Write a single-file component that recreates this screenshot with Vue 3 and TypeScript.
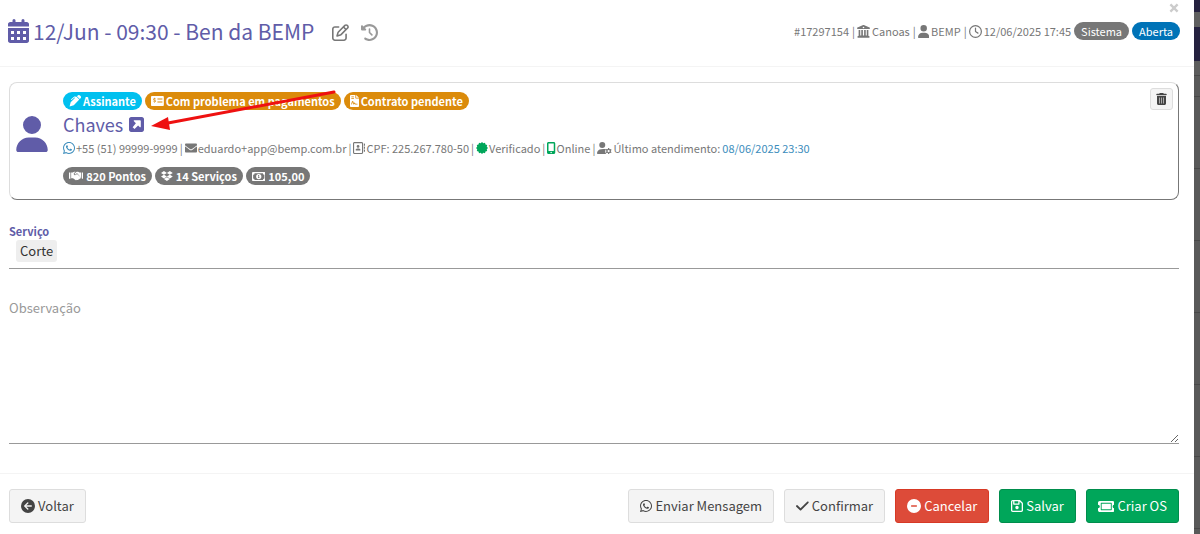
<script setup lang="ts">
import { ref } from 'vue'

interface Glyph {
  w: number
  h: number
  d: string
}

// Twelve-lobed seal used for the "Verificado" mark
function seal(): string {
  const points: string[] = []
  for (let i = 0; i < 24; i++) {
    const r = i % 2 === 0 ? 8 : 6.6
    const a = (i * Math.PI) / 12
    points.push(`${(8 + r * Math.cos(a)).toFixed(2)} ${(8 + r * Math.sin(a)).toFixed(2)}`)
  }
  return `M${points.join('L')}Z`
}

const glyphs: Record<string, Glyph> = {
  calendar: { w: 448, h: 512, d: 'M96 32V64H48C21.5 64 0 85.5 0 112V160H448V112C448 85.5 426.5 64 400 64H352V32A32 32 0 0 0 288 32V64H160V32A32 32 0 0 0 96 32ZM0 192V464C0 490.5 21.5 512 48 512H400C426.5 512 448 490.5 448 464V192ZM64 256H128V320H64ZM192 256H256V320H192ZM320 256H384V320H320ZM64 384H128V448H64ZM192 384H256V448H192ZM320 384H384V448H320Z' },
  edit: { w: 512, h: 512, d: 'M441 58.9L453.1 71C462.5 80.4 462.5 95.6 453.1 104.9L424 134.1L377.9 88L407 58.9C416.4 49.5 431.6 49.5 440.9 58.9ZM209.8 256.2L344 121.9L390.1 168L255.8 302.2C252.9 305.1 249.2 307.2 245.2 308.3L186.7 325L203.4 266.5C204.5 262.5 206.6 258.8 209.5 255.9ZM373.1 25L175.8 222.2C167.1 230.9 160.8 241.6 157.3 253.3L128.9 352.6C126.5 361 128.8 370 135 376.2S150.2 384.7 158.6 382.3L257.9 353.9C269.7 350.5 280.4 344.2 289 335.6L487 138.9C515.1 110.8 515.1 65.2 487 37.1L474.9 25C446.8 -3.1 401.2 -3.1 373.1 25ZM88 64C39.4 64 0 103.4 0 152V424C0 472.6 39.4 512 88 512H360C408.6 512 448 472.6 448 424V312A24 24 0 0 0 400 312V424C400 446.1 382.1 464 360 464H88C65.9 464 48 446.1 48 424V152C48 129.9 65.9 112 88 112H200A24 24 0 0 0 200 64Z' },
  history: { w: 512, h: 512, d: 'M75 75L41 41C25.9 25.9 0 36.6 0 57.9V168C0 181.3 10.7 192 24 192H134.1C155.5 192 166.2 166.1 151.1 151L120.3 120.2C155 85.5 203 64 256 64C362 64 448 150 448 256S362 448 256 448C215.2 448 177.4 435.3 146.3 413.6C131.8 403.5 111.9 407 101.7 421.5S95.2 455.9 109.6 466.1C151.2 495 201.7 512 256 512C397.4 512 512 397.4 512 256S397.4 0 256 0C185.3 0 121.3 28.7 75 75ZM256 128C242.7 128 232 138.7 232 152V256C232 262.4 234.5 268.5 239 273L311 345A24 24 0 0 0 345 311L280 246.1V152C280 138.7 269.3 128 256 128Z' },
  bank: { w: 512, h: 512, d: 'M243.4 2.6L19.4 98.6C6 104 0 114 0 128C0 148 14 160 32 160H480C498 160 512 148 512 128C512 114 506 104 492.6 98.6L268.6 2.6C260 -1 252 -1 243.4 2.6ZM256 64A32 32 0 1 1 256 128A32 32 0 1 1 256 64ZM64 192V420L29 444C18 451 12 466 16 482C20 494 29 500 40 500H472C483 500 492 494 496 482C500 466 494 451 483 444L448 420V192H384V416H344V192H280V416H232V192H168V416H128V192Z' },
  user: { w: 448, h: 512, d: 'M224 256A128 128 0 1 0 224 0a128 128 0 1 0 0 256zm-45.7 48C79.8 304 0 383.8 0 482.3C0 498.7 13.3 512 29.7 512H418.3c16.4 0 29.7-13.3 29.7-29.7C448 383.8 368.2 304 269.7 304H178.3z' },
  clock: { w: 512, h: 512, d: 'M256 0A256 256 0 1 0 256 512A256 256 0 1 0 256 0ZM256 48A208 208 0 1 1 256 464A208 208 0 1 1 256 48ZM232 120V256C232 264 236 271.5 242.7 276L338.7 340A24 24 0 0 0 365.3 300L280 243.2V120A24 24 0 0 0 232 120Z' },
  pen: { w: 512, h: 512, d: 'M373 20L340 53L459 172L492 139C520 111 520 70 492 43L469 20C441 -7 400 -7 373 20ZM321 72L230 60L78 190L104 216L236 104L262 118L72 308L24 488C20 503 9 492 24 488L204 440L440 191Z' },
  moneyCheck: { w: 576, h: 448, d: 'M48 0C21 0 0 21 0 48V400C0 427 21 448 48 448H528C555 448 576 427 576 400V48C576 21 555 0 528 0ZM148 80H172V106C190 109 204 114 214 120L204 152C180 140 145 136 143 152C141 174 220 166 220 224C220 250 202 270 172 276V304H148V278C128 276 114 270 102 262L114 230C140 246 178 250 178 226C178 202 100 208 100 154C100 126 120 110 148 106ZM288 112H512V160H288ZM288 248H512V296H288Z' },
  contract: { w: 384, h: 512, d: 'M48 0C21 0 0 21 0 48V464C0 491 21 512 48 512H336C363 512 384 491 384 464V150H248C238 150 230 142 230 132V0ZM262 0V118H384ZM56 64H168V96H56ZM56 128H168V160H56ZM112 256C126 256 136 266 142 282L164 350C178 316 214 318 226 350L234 368H320V400H222C208 400 204 394 196 376C194 370 188 370 186 376L172 402H148L112 298L86 390C82 400 72 408 56 408V376L82 282C88 266 98 256 112 256Z' },
  external: { w: 448, h: 448, d: 'M64 0C28.7 0 0 28.7 0 64V384C0 419.3 28.7 448 64 448H384C419.3 448 448 419.3 448 384V64C448 28.7 419.3 0 384 0ZM160 96H330C344 96 352 104 352 118V288C352 306 330 314 318 302L272 256L166 362L108 304L206 190L146 130C134 118 142 96 160 96Z' },
  whatsapp: { w: 448, h: 448, d: 'M380.9 65.1C339 23.1 283.2 0 223.9 0c-122.4 0-222 99.6-222 222 0 39.1 10.2 77.3 29.6 111L0 448l117.7-30.9c32.4 17.7 68.9 27 106.1 27h.1c122.3 0 224.1-99.6 224.1-222 0-59.3-25.2-115-67.1-157zm-157 341.6c-33.2 0-65.7-8.9-94-25.7l-6.7-4-69.8 18.3L72 327.2l-4.4-7c-18.5-29.4-28.2-63.3-28.2-98.2 0-101.7 82.8-184.5 184.6-184.5 49.3 0 95.6 19.2 130.4 54.1 34.8 34.9 56.2 81.2 56.1 130.5 0 101.8-84.9 184.6-186.6 184.6zm101.2-138.2c-5.5-2.8-32.8-16.2-37.9-18-5.1-1.9-8.8-2.8-12.5 2.8-3.7 5.6-14.3 18-17.6 21.8-3.2 3.7-6.5 4.2-12 1.4-32.6-16.3-54-29.1-75.5-66-5.7-9.8 5.7-9.1 16.3-30.3 1.8-3.7.9-6.9-.5-9.7-1.4-2.8-12.5-30.1-17.1-41.2-4.5-10.8-9.1-9.3-12.5-9.5-3.2-.2-6.9-.2-10.6-.2-3.7 0-9.7 1.4-14.8 6.9-5.1 5.6-19.4 19-19.4 46.3 0 27.3 19.9 53.7 22.6 57.4 2.8 3.7 39.1 59.7 94.8 83.8 35.2 15.2 49 16.5 66.6 13.9 10.7-1.6 32.8-13.4 37.4-26.4 4.6-13 4.6-24.1 3.2-26.4-1.3-2.5-5-3.9-10.5-6.6z' },
  envelope: { w: 512, h: 512, d: 'M502.3 190.8c3.9-3.1 9.7-.2 9.7 4.7V400c0 26.5-21.5 48-48 48H48c-26.5 0-48-21.5-48-48V195.6c0-5 5.7-7.8 9.7-4.7 22.4 17.4 52.1 39.5 154.1 113.6 21.1 15.4 56.7 47.8 92.2 47.6 35.7.3 72-32.8 92.3-47.6 102-74.1 131.6-96.3 154-113.7zM256 320c23.2.4 56.6-29.2 73.4-41.4 132.7-96.3 142.8-104.7 173.4-128.7 5.8-4.5 9.2-11.5 9.2-18.9v-19c0-26.5-21.5-48-48-48H48c-26.5 0-48 21.5-48 48v19c0 7.4 3.4 14.3 9.2 18.9 30.6 23.9 40.7 32.4 173.4 128.7 16.8 12.2 50.2 41.8 73.4 41.4z' },
  addressBook: { w: 512, h: 512, d: 'M64 0C28.7 0 0 28.7 0 64V448C0 483.3 28.7 512 64 512H368C403.3 512 432 483.3 432 448V64C432 28.7 403.3 0 368 0ZM64 48H368C377 48 384 55 384 64V448C384 457 377 464 368 464H64C55 464 48 457 48 448V64C48 55 55 48 64 48ZM216 128A60 60 0 1 1 216 248A60 60 0 1 1 216 128ZM180 272H252C292 272 320 304 320 344C320 354 314 360 304 360H128C118 360 112 354 112 344C112 304 140 272 180 272ZM464 64H496A16 16 0 0 1 512 80V144A16 16 0 0 1 496 160H464ZM464 192H496A16 16 0 0 1 512 208V272A16 16 0 0 1 496 288H464ZM464 320H496A16 16 0 0 1 512 336V400A16 16 0 0 1 496 416H464Z' },
  seal: { w: 16, h: 16, d: seal() },
  phone: { w: 352, h: 512, d: 'M64 0C29 0 0 29 0 64V448C0 483 29 512 64 512H288C323 512 352 483 352 448V64C352 29 323 0 288 0ZM64 64H288V384H64ZM176 416A32 32 0 1 1 176 480A32 32 0 1 1 176 416Z' },
  userGear: { w: 640, h: 512, d: 'M224 0A128 128 0 1 0 224 256A128 128 0 1 0 224 0ZM178 304C80 304 0 384 0 482C0 499 13 512 30 512H404C370 486 350 450 354 404L346 380L380 306C360 300 300 304 178 304ZM474 256H518L528 298L556 314L598 302L620 340L590 370V402L620 432L598 470L556 458L528 474L518 512H474L464 474L436 458L394 470L372 432L402 402V370L372 340L394 302L436 314L464 298ZM496 338A48 48 0 1 0 496 434A48 48 0 1 0 496 338Z' },
  handshake: { w: 640, h: 448, d: 'M0 64H64V352H0ZM576 64H640V352H576ZM96 64H170L230 32H290L240 80C200 120 210 160 240 180C270 200 310 180 330 160L360 132L510 270C530 290 530 320 510 336C500 346 486 350 472 344C470 370 446 386 420 378C410 404 380 414 354 396C336 416 310 416 290 400L180 320H96ZM544 64V300L374 108C366 100 356 98 346 106L304 144C290 158 268 158 258 144C248 132 250 114 264 102L326 48C340 36 360 32 378 32H410L470 64Z' },
  dropbox: { w: 528, h: 448, d: 'M132 0L264 84L132 168L0 84ZM396 0L528 84L396 168L264 84ZM132 168L264 252L132 336L0 252ZM396 168L528 252L396 336L264 252ZM132 364L264 280L396 364L264 448Z' },
  money: { w: 576, h: 384, d: 'M48 0C21 0 0 21 0 48V336C0 363 21 384 48 384H528C555 384 576 363 576 336V48C576 21 555 0 528 0ZM112 48H464A64 64 0 0 0 528 112V272A64 64 0 0 0 464 336H112A64 64 0 0 0 48 272V112A64 64 0 0 0 112 48ZM288 80A112 112 0 1 0 288 304A112 112 0 1 0 288 80ZM270 128H304V228H320V256H256V228H272V160H256V136Z' },
  trash: { w: 448, h: 512, d: 'M135 18L128 32H32A32 32 0 0 0 32 96H416A32 32 0 0 0 416 32H320L313 18C307 7 296 0 284 0H164C152 0 141 7 135 18ZM32 128V448C32 483 61 512 96 512H352C387 512 416 483 416 448V128ZM128 192H152V448H128ZM212 192H236V448H212ZM296 192H320V448H296Z' },
  back: { w: 512, h: 512, d: 'M256 0A256 256 0 1 0 256 512A256 256 0 1 0 256 0ZM231 127A24 24 0 0 1 265 161L194 232H376A24 24 0 0 1 376 280H194L265 351A24 24 0 0 1 231 385L119 273C110 264 110 248 119 239Z' },
  check: { w: 448, h: 352, d: 'M438.6 25.4C451.1 37.9 451.1 58.1 438.6 70.6L182.6 326.6C170.1 339.1 149.9 339.1 137.4 326.6L9.4 198.6A32 32 0 0 1 54.6 153.4L160 258.7L393.4 25.4C405.9 12.9 426.1 12.9 438.6 25.4Z' },
  minus: { w: 512, h: 512, d: 'M256 0A256 256 0 1 0 256 512A256 256 0 1 0 256 0ZM168 232H344A24 24 0 0 1 344 280H168A24 24 0 0 1 168 232Z' },
  save: { w: 448, h: 448, d: 'M64 0C29 0 0 29 0 64V384C0 419 29 448 64 448H384C419 448 448 419 448 384V138C448 122 442 106 430 94L354 18C342 6 326 0 310 0ZM48 64C48 55 55 48 64 48H80V152C80 165 91 176 104 176H296C309 176 320 165 320 152V52L396 128C399 131 400 134 400 138V384C400 393 393 400 384 400H64C55 400 48 393 48 384ZM128 48H272V128H128ZM224 216A64 64 0 1 0 224 344A64 64 0 1 0 224 216Z' },
  ticket: { w: 576, h: 384, d: 'M64 0C29 0 0 29 0 64V128A64 64 0 0 1 0 256V320C0 355 29 384 64 384H512C547 384 576 355 576 320V256A64 64 0 0 1 576 128V64C576 29 547 0 512 0ZM112 64H464C473 64 480 71 480 80V304C480 313 473 320 464 320H112C103 320 96 313 96 304V80C96 71 103 64 112 64ZM128 96V288H448V96Z' },
}

const flags = [
  { icon: 'pen', text: 'Assinante', tone: 'info', size: 'tall' },
  { icon: 'moneyCheck', text: 'Com problema em pagamentos', tone: 'warn', size: 'low' },
  { icon: 'contract', text: 'Contrato pendente', tone: 'warn', size: 'tall' },
]
const stats = [
  { icon: 'handshake', text: '820 Pontos', size: 'low' },
  { icon: 'dropbox', text: '14 Serviços', size: 'low' },
  { icon: 'money', text: '105,00', size: 'flat' },
]
const contact = [
  { icon: 'whatsapp', text: '+55 (51) 99999-9999', tone: 'blue' },
  { icon: 'envelope', text: 'eduardo+app@bemp.com.br', tone: '' },
  { icon: 'addressBook', text: 'CPF: 225.267.780-50', tone: '' },
  { icon: 'seal', text: 'Verificado', tone: 'green' },
  { icon: 'phone', text: 'Online', tone: 'green' },
  { icon: 'userGear', text: 'Último atendimento:', tone: '' },
]
const meta = [
  { icon: '', text: '#17297154' },
  { icon: 'bank', text: 'Canoas' },
  { icon: 'user', text: 'BEMP' },
  { icon: 'clock', text: '12/06/2025 17:45' },
]
const actions = [
  { icon: 'whatsapp', text: 'Enviar Mensagem', tone: 'plain', size: 'tall' },
  { icon: 'check', text: 'Confirmar', tone: 'plain', size: 'low' },
  { icon: 'minus', text: 'Cancelar', tone: 'danger', size: 'big' },
  { icon: 'save', text: 'Salvar', tone: 'success', size: 'tall' },
  { icon: 'ticket', text: 'Criar OS', tone: 'success', size: 'mid' },
]

const service = ref('Corte')
const note = ref('')

const box = (name: string) => `0 0 ${glyphs[name].w} ${glyphs[name].h}`
</script>

<template>
  <div class="screen">
    <main class="modal">
      <header class="head">
        <h1 class="title">
          <svg class="ico ico-title" :viewBox="box('calendar')"><path :d="glyphs.calendar.d" /></svg>
          <span>12/Jun - 09:30 - Ben da BEMP</span>
          <span class="tools">
            <button class="tool" type="button" aria-label="Editar">
              <svg class="ico ico-tool" :viewBox="box('edit')"><path :d="glyphs.edit.d" /></svg>
            </button>
            <button class="tool light" type="button" aria-label="Histórico">
              <svg class="ico ico-tool" :viewBox="box('history')"><path :d="glyphs.history.d" /></svg>
            </button>
          </span>
        </h1>
        <div class="meta">
          <template v-for="(m, i) in meta" :key="m.text">
            <span v-if="i > 0" class="sep">|</span>
            <span class="item">
              <svg v-if="m.icon" class="ico ico-meta" :viewBox="box(m.icon)"><path :d="glyphs[m.icon].d" /></svg>
              <span>{{ m.text }}</span>
            </span>
          </template>
          <span class="tag">Sistema</span>
          <span class="tag open">Aberta</span>
        </div>
        <button class="close" type="button" aria-label="Fechar">
          <svg class="ico ico-close" viewBox="0 0 18 18"><path d="M1 4L4 1L9 6L14 1L17 4L12 9L17 14L14 17L9 12L4 17L1 14L6 9Z" /></svg>
        </button>
      </header>

      <section class="body">
        <article class="card">
          <svg class="ico avatar" :viewBox="box('user')"><path :d="glyphs.user.d" /></svg>
          <div class="info">
            <div class="badges">
              <span v-for="f in flags" :key="f.text" class="badge" :class="f.tone">
                <svg class="ico" :class="f.size" :viewBox="box(f.icon)"><path :d="glyphs[f.icon].d" /></svg>
                <span>{{ f.text }}</span>
              </span>
            </div>
            <h2 class="name">
              <span>Chaves</span>
              <button class="tool purple" type="button" aria-label="Abrir cadastro">
                <svg class="ico ico-open" :viewBox="box('external')"><path :d="glyphs.external.d" /></svg>
              </button>
            </h2>
            <div class="contact">
              <template v-for="(c, i) in contact" :key="c.text">
                <span v-if="i > 0" class="sep">|</span>
                <span class="item">
                  <svg class="ico ico-contact" :class="c.tone" :viewBox="box(c.icon)"><path :d="glyphs[c.icon].d" /></svg>
                  <span>{{ c.text }}</span>
                </span>
              </template>
              <a class="last" href="#">08/06/2025 23:30</a>
            </div>
            <div class="badges stats">
              <span v-for="s in stats" :key="s.text" class="badge">
                <svg class="ico" :class="s.size" :viewBox="box(s.icon)"><path :d="glyphs[s.icon].d" /></svg>
                <span>{{ s.text }}</span>
              </span>
            </div>
          </div>
          <button class="remove" type="button" aria-label="Remover">
            <svg class="ico ico-trash" :viewBox="box('trash')"><path :d="glyphs.trash.d" /></svg>
          </button>
          <svg class="arrow" viewBox="0 0 190 44">
            <path class="shaft" d="M18 35L184 4" />
            <path d="M1 38L18 29L20 42Z" />
          </svg>
        </article>

        <div class="field">
          <label class="label" for="service">Serviço</label>
          <div class="choice">
            <input id="service" v-model="service" class="chip" type="text" readonly />
          </div>
        </div>

        <div class="field notes">
          <label class="hint" for="note">Observação</label>
          <textarea id="note" v-model="note" class="area"></textarea>
        </div>
      </section>

      <footer class="foot">
        <button class="btn plain first" type="button">
          <svg class="ico big" :viewBox="box('back')"><path :d="glyphs.back.d" /></svg>
          <span>Voltar</span>
        </button>
        <button v-for="a in actions" :key="a.text" class="btn" :class="a.tone" type="button">
          <svg class="ico" :class="a.size" :viewBox="box(a.icon)"><path :d="glyphs[a.icon].d" /></svg>
          <span>{{ a.text }}</span>
        </button>
      </footer>
    </main>
    <div class="backdrop"></div>
  </div>
</template>

<style>
body {
  margin: 0;
  background: #fff;
}
</style>

<style scoped>
.screen {
  display: grid;
  grid-template-columns: 1fr 6px;
  min-height: 100vh;
  font-family: "Noto Sans CJK SC", "Open Sans", sans-serif;
  font-size: 13px;
  line-height: 18px;
  color: #444;
}
.screen * {
  box-sizing: border-box;
}
button,
input,
textarea {
  font: inherit;
  color: inherit;
}
.backdrop {
  background:
    linear-gradient(#25213f 0 12px, #5f5f5f 12px 27px, #25213f 27px 61px, #5c5c5c 61px 75px, #484848 75px 76px, transparent 76px),
    repeating-linear-gradient(#484848 0 1px, transparent 1px 72px) 0 96px / 100% 100% no-repeat,
    #595959;
}
.modal {
  background: #fff;
}
.ico {
  display: block;
  flex: none;
  width: auto;
  fill: currentColor;
  fill-rule: evenodd;
}
.flat {
  height: 9px;
}
.low {
  height: 10px;
}
.mid {
  height: 11px;
}
.tall {
  height: 12px;
}
.big {
  height: 14px;
}
.head {
  position: relative;
  display: flex;
  align-items: center;
  justify-content: space-between;
  height: 67px;
  padding: 0 14px 4px 8px;
  border-bottom: 1px solid #f4f4f4;
}
.title {
  display: flex;
  align-items: center;
  gap: 4px;
  margin: 0;
  font-size: 21px;
  font-weight: 400;
  line-height: 28px;
  color: #605ca8;
}
.ico-title {
  width: 21px;
  height: 24px;
}
.tools {
  display: flex;
  gap: 12px;
  padding: 3px 0 0 14px;
}
.tool {
  padding: 0;
  border: 0;
  background: none;
  color: #777;
}
.tool.light {
  color: #999;
}
.ico-tool {
  width: 17px;
  height: 17px;
}
.meta,
.contact {
  display: flex;
  align-items: center;
  font-size: 11px;
  color: #777;
  white-space: nowrap;
}
.item {
  display: flex;
  align-items: center;
  gap: 2px;
}
.sep {
  margin: 0 2px;
}
.meta .sep {
  margin: 0 2px 0 3px;
}
.ico-meta {
  height: 13px;
}
.tag {
  margin-left: 3px;
  padding: 0 7px;
  border-radius: 9px;
  background: #777;
  color: #fff;
}
.tag.open {
  background: #0073b7;
}
.close {
  position: absolute;
  top: 3px;
  right: 15px;
  padding: 0;
  border: 0;
  background: none;
  color: #ccc;
}
.ico-close {
  width: 10px;
  height: 10px;
}
.body {
  padding: 15px 15px 29px 9px;
}
.card {
  position: relative;
  display: flex;
  gap: 15px;
  min-height: 118px;
  padding: 9px 5px 14px 6px;
  border: 1px solid #ddd;
  border-right-color: #777;
  border-bottom-color: #777;
  border-radius: 8px;
}
.avatar {
  width: 32px;
  height: 36px;
  margin-top: 24px;
}
.avatar,
.purple {
  color: #605ca8;
}
.info {
  flex: 1;
}
.badges {
  display: flex;
  gap: 3px;
}
.badge {
  display: flex;
  align-items: center;
  gap: 2px;
  padding: 0 6px;
  border-radius: 9px;
  background: #777;
  font-size: 11px;
  font-weight: 700;
  color: #fff;
}
.stats .badge {
  gap: 3px;
}
.badge.info {
  flex: none;
  background: #00c0ef;
}
.badge.warn {
  background: #db8b0b;
}
.name {
  display: flex;
  align-items: center;
  gap: 6px;
  margin: 2px 0 3px;
  font-size: 18px;
  font-weight: 400;
  line-height: 24px;
  color: #605ca8;
}
.name .tool {
  color: #605ca8;
}
.ico-open {
  width: 15px;
  height: 15px;
}
.contact {
  margin-bottom: 10px;
}
.contact .item {
  gap: 1px;
}
.ico-contact {
  height: 12px;
}
.blue,
.last {
  color: #3c8dbc;
}
.green {
  color: #00a65a;
}
.last {
  margin-left: 2px;
  text-decoration: none;
}
.remove {
  display: grid;
  place-items: center;
  width: 23px;
  height: 22px;
  margin-top: -4px;
  padding: 0;
  border: 1px solid #ddd;
  border-radius: 3px;
  background: #f4f4f4;
  color: #444;
}
.ico-trash {
  width: 11px;
  height: 12px;
}
.arrow {
  position: absolute;
  top: 5px;
  left: 140px;
  width: 190px;
  height: 44px;
  fill: #ee1111;
}
.shaft {
  fill: none;
  stroke: #ee1111;
  stroke-width: 3;
  stroke-linecap: round;
}
.field {
  display: flex;
  flex-direction: column;
  margin-top: 22px;
}
.label {
  font-size: 11px;
  font-weight: 700;
  color: #605ca8;
}
.choice {
  padding: 0 7px 6px;
  border-bottom: 1px solid #999;
}
.chip {
  display: block;
  width: 41px;
  height: 22px;
  padding: 0 4px 2px;
  border: 0;
  border-radius: 3px;
  background: #eee;
  color: #333;
}
.notes {
  margin-top: 30px;
}
.hint {
  color: #999;
}
.area {
  display: block;
  width: 100%;
  height: 127px;
  padding: 0;
  border: 0;
  border-bottom: 1px solid #999;
  background: none;
  resize: vertical;
}
.foot {
  display: flex;
  gap: 10px;
  padding: 15px 15px 10px 9px;
  border-top: 1px solid #f4f4f4;
}
.btn {
  display: flex;
  align-items: center;
  gap: 3px;
  height: 34px;
  padding: 0 11px;
  border: 1px solid #ddd;
  border-radius: 3px;
  background: #f4f4f4;
  white-space: nowrap;
}
.first {
  margin-right: auto;
}
.danger {
  border-color: #d73925;
  background: #dd4b39;
  color: #fff;
}
.success {
  border-color: #008d4c;
  background: #00a65a;
  color: #fff;
}
</style>
